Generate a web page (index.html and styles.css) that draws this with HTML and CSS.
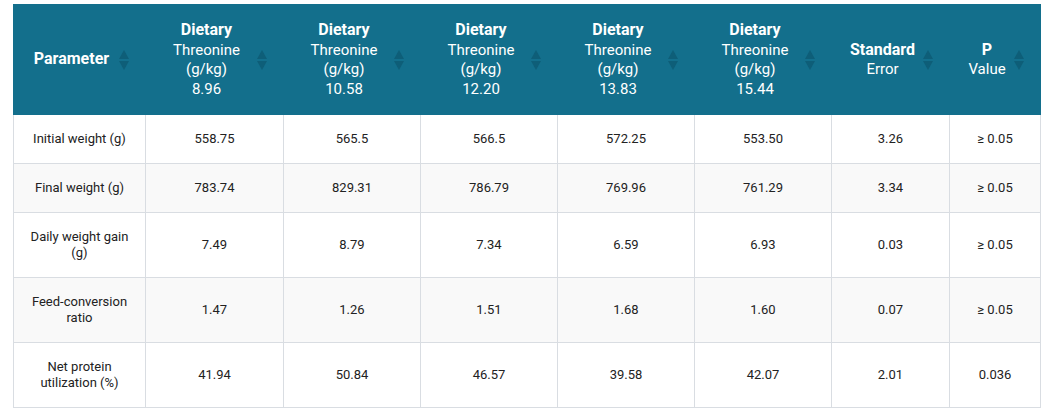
FILE: index.html
```html
<!DOCTYPE html>
<html>
<head>
<meta charset="utf-8">
<link rel="stylesheet" href="styles.css">
</head>
<body>
<table class="data">
  <colgroup>
    <col class="c-param"><col class="c-d1"><col class="c-d"><col class="c-d"><col class="c-d"><col class="c-d"><col class="c-se"><col class="c-p">
  </colgroup>
  <thead>
    <tr>
      <th><span class="h"><b>Parameter</b></span><svg class="sort" viewBox="0 0 10 20"><path d="M5 0 L10 9 L0 9 Z"/><path d="M0 11 L10 11 L5 20 Z"/></svg></th>
      <th><span class="h"><b>Dietary</b><br>Threonine<br>(g/kg)<br>8.96</span><svg class="sort" viewBox="0 0 10 20"><path d="M5 0 L10 9 L0 9 Z"/><path d="M0 11 L10 11 L5 20 Z"/></svg></th>
      <th><span class="h"><b>Dietary</b><br>Threonine<br>(g/kg)<br>10.58</span><svg class="sort" viewBox="0 0 10 20"><path d="M5 0 L10 9 L0 9 Z"/><path d="M0 11 L10 11 L5 20 Z"/></svg></th>
      <th><span class="h"><b>Dietary</b><br>Threonine<br>(g/kg)<br>12.20</span><svg class="sort" viewBox="0 0 10 20"><path d="M5 0 L10 9 L0 9 Z"/><path d="M0 11 L10 11 L5 20 Z"/></svg></th>
      <th><span class="h"><b>Dietary</b><br>Threonine<br>(g/kg)<br>13.83</span><svg class="sort" viewBox="0 0 10 20"><path d="M5 0 L10 9 L0 9 Z"/><path d="M0 11 L10 11 L5 20 Z"/></svg></th>
      <th><span class="h"><b>Dietary</b><br>Threonine<br>(g/kg)<br>15.44</span><svg class="sort" viewBox="0 0 10 20"><path d="M5 0 L10 9 L0 9 Z"/><path d="M0 11 L10 11 L5 20 Z"/></svg></th>
      <th><span class="h"><b>Standard</b><br>Error</span><svg class="sort" viewBox="0 0 10 20"><path d="M5 0 L10 9 L0 9 Z"/><path d="M0 11 L10 11 L5 20 Z"/></svg></th>
      <th><span class="h"><b>P</b><br>Value</span><svg class="sort" viewBox="0 0 10 20"><path d="M5 0 L10 9 L0 9 Z"/><path d="M0 11 L10 11 L5 20 Z"/></svg></th>
    </tr>
  </thead>
  <tbody>
    <tr><td>Initial weight (g)</td><td>558.75</td><td>565.5</td><td>566.5</td><td>572.25</td><td>553.50</td><td>3.26</td><td>≥ 0.05</td></tr>
    <tr><td>Final weight (g)</td><td>783.74</td><td>829.31</td><td>786.79</td><td>769.96</td><td>761.29</td><td>3.34</td><td>≥ 0.05</td></tr>
    <tr><td>Daily weight gain<br>(g)</td><td>7.49</td><td>8.79</td><td>7.34</td><td>6.59</td><td>6.93</td><td>0.03</td><td>≥ 0.05</td></tr>
    <tr><td>Feed-conversion<br>ratio</td><td>1.47</td><td>1.26</td><td>1.51</td><td>1.68</td><td>1.60</td><td>0.07</td><td>≥ 0.05</td></tr>
    <tr><td>Net protein<br>utilization (%)</td><td>41.94</td><td>50.84</td><td>46.57</td><td>39.58</td><td>42.07</td><td>2.01</td><td>0.036</td></tr>
  </tbody>
</table>
</body>
</html>
```

FILE: styles.css
```css
html, body {
  margin: 0;
  background: #ffffff;
}
body {
  padding: 4px 10px 0 13px;
  font-family: Roboto, "Liberation Sans", Arial, sans-serif;
}
.data {
  border-collapse: collapse;
  table-layout: fixed;
  width: 1027px;
}
.c-param { width: 132px; }
.c-d1 { width: 138px; }
.c-d { width: 137px; }
.c-se { width: 118px; }
.c-p { width: 91px; }

.data thead th {
  position: relative;
  background: #136f8c;
  color: #ffffff;
  font-size: 15px;
  font-weight: 400;
  line-height: 19.5px;
  height: 110px;
  box-sizing: border-box;
  padding: 10px 26px 10px 10px;
  text-align: center;
  vertical-align: middle;
  border: 1px solid #136f8c;
}
.data thead th b {
  font-weight: 700;
  font-size: 16px;
}
.sort {
  position: absolute;
  right: 16px;
  top: 50%;
  width: 10px;
  height: 20px;
  margin-top: -10px;
  fill: #0e5e78;
}
.data tbody td {
  font-size: 13px;
  line-height: 16px;
  color: #222222;
  text-align: center;
  vertical-align: middle;
  padding: 16px 8px;
  border: 1px solid #d9dde2;
}
.data tbody tr:nth-child(even) td {
  background: #f9f9f9;
}
```
